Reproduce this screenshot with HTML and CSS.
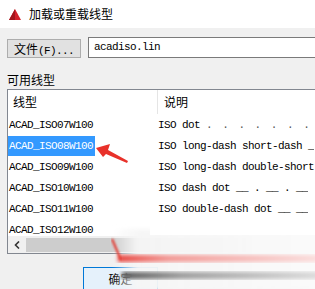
FILE: index.html
```html
<!DOCTYPE html>
<html lang="zh-CN">
<head>
    <meta charset="UTF-8">
    <title>加载或重载线型</title>
    <link rel="stylesheet" href="styles.css">
</head>
<body>
    <div class="titlebar">
        <svg class="logo" viewBox="0 0 12 11">
            <polygon points="6,0 12,11 0,11" fill="#d4202a"/>
            <polygon points="6,0 6,11 0,11" fill="#a3151c"/>
        </svg>
        <span class="title">加载或重载线型</span>
    </div>

    <div class="content">
        <div class="file-row">
            <button class="file-btn"><span class="cjk">文件</span>(F)...</button>
            <div class="file-input">acadiso.lin</div>
        </div>

        <div class="label">可用线型</div>

        <div class="list">
            <div class="list-head">
                <div class="h-name">线型</div>
                <div class="h-desc">说明</div>
            </div>
            <div class="rows">
                <div class="row">
                    <div class="c-name"><span>ACAD_ISO07W100</span></div>
                    <div class="c-desc">ISO dot <span class="dots">. . . . . . .</span></div>
                </div>
                <div class="row">
                    <div class="c-name"><span class="selected">ACAD_ISO08W100</span></div>
                    <div class="c-desc">ISO long-dash short-dash _</div>
                </div>
                <div class="row">
                    <div class="c-name"><span>ACAD_ISO09W100</span></div>
                    <div class="c-desc">ISO long-dash double-short</div>
                </div>
                <div class="row">
                    <div class="c-name"><span>ACAD_ISO10W100</span></div>
                    <div class="c-desc">ISO dash dot __ . __ . __</div>
                </div>
                <div class="row">
                    <div class="c-name"><span>ACAD_ISO11W100</span></div>
                    <div class="c-desc">ISO double-dash dot __ __</div>
                </div>
                <div class="row">
                    <div class="c-name"><span>ACAD_ISO12W100</span></div>
                    <div class="c-desc">ISO dash double-dot __ . .</div>
                </div>
            </div>
            <div class="hscroll">
                <div class="scroll-btn">
                    <svg viewBox="0 0 6 8" class="chev"><polyline points="5,0.5 1.5,4 5,7.5" fill="none" stroke="#333" stroke-width="1.6"/></svg>
                </div>
                <div class="thumb"></div>
            </div>
        </div>

        <div class="footer">
            <button class="ok">确定</button>
        </div>
    </div>

    <!-- annotation arrows and motion smear over the dialog -->
    <svg class="overlay" viewBox="0 0 315 289">
        <defs>
            <filter id="blur1"><feGaussianBlur stdDeviation="1.2"/></filter>
            <filter id="blur2"><feGaussianBlur stdDeviation="2.2"/></filter>
            <linearGradient id="haze" x1="0" x2="1" y1="0" y2="0">
                <stop offset="0" stop-color="#f4f4f4" stop-opacity="0"/>
                <stop offset="0.12" stop-color="#f6f6f6" stop-opacity="0.95"/>
                <stop offset="1" stop-color="#fafafa" stop-opacity="1"/>
            </linearGradient>
            <linearGradient id="pink" x1="0" x2="1" y1="0" y2="0">
                <stop offset="0" stop-color="#e8403a"/>
                <stop offset="0.25" stop-color="#f29490"/>
                <stop offset="1" stop-color="#fadcdb"/>
            </linearGradient>
            <linearGradient id="grey" x1="0" x2="1" y1="0" y2="0">
                <stop offset="0" stop-color="#555"/>
                <stop offset="0.3" stop-color="#9a9a9a"/>
                <stop offset="1" stop-color="#dcdcdc"/>
            </linearGradient>
        </defs>
        <polygon points="96,148 110,144 108,150 128,161 127,163 106,154 103,157" fill="#e8312a"/>

        <rect x="112" y="229" width="210" height="62" fill="url(#haze)" filter="url(#blur2)"/>
        <rect x="150" y="221" width="170" height="14" fill="#fff"/>
        <rect x="118" y="255" width="200" height="7" fill="url(#pink)" filter="url(#blur2)"/>
        <rect x="122" y="272" width="200" height="7" fill="url(#grey)" filter="url(#blur2)"/>
        <line x1="112" y1="239" x2="121" y2="260" stroke="#e23a33" stroke-width="2.2" filter="url(#blur1)"/>
    </svg>
</body>
</html>
```

FILE: styles.css
```css
* {
    margin: 0;
    padding: 0;
    box-sizing: border-box;
}

body {
    width: 315px;
    height: 289px;
    overflow: hidden;
    position: relative;
    background: #f0f0f0;
    font-family: "Noto Sans CJK SC", "Liberation Sans", sans-serif;
    font-size: 12px;
    color: #000;
}

.titlebar {
    height: 28px;
    background: #fff;
    display: flex;
    align-items: center;
    gap: 8px;
    padding-left: 9px;
}

.logo {
    width: 12px;
    height: 11px;
}

.title {
    line-height: 16px;
}

.content {
    padding: 9px 0 0 7px;
}

.file-row {
    display: flex;
    align-items: center;
    gap: 7px;
    height: 21px;
}

.file-btn {
    width: 74px;
    height: 19px;
    margin-top: 1px;
    background: #e1e1e1;
    border: 1px solid #adadad;
    text-align: left;
    padding-left: 6px;
    font-family: "Liberation Mono", "Noto Sans CJK SC", monospace;
    font-size: 11px;
    letter-spacing: -0.6px;
    line-height: 17px;
    color: #000;
}

.file-btn .cjk {
    font-family: "Noto Sans CJK SC", sans-serif;
    font-size: 12px;
    letter-spacing: 0;
}

.file-input {
    flex: 1;
    height: 21px;
    background: #fff;
    border: 1px solid #7a7a7a;
    border-right: none;
    padding-left: 5px;
    font-family: "Liberation Mono", monospace;
    font-size: 11px;
    letter-spacing: -0.6px;
    line-height: 19px;
}

.label {
    margin-top: 14px;
    height: 16px;
    line-height: 16px;
}

.list {
    margin-top: 1px;
    width: 310px;
    height: 165px;
    background: #fff;
    border: 1px solid #828790;
    display: flex;
    flex-direction: column;
}

.list-head {
    display: flex;
    height: 24px;
    line-height: 24px;
    flex-shrink: 0;
}

.h-name {
    width: 150px;
    flex-shrink: 0;
    padding-left: 5px;
    border-right: 1px solid #e5e5e5;
}

.h-desc {
    padding-left: 6px;
}

.rows {
    height: 122px;
    overflow: hidden;
    flex-shrink: 0;
}

.row {
    display: flex;
    height: 21px;
    padding-top: 1px;
    font-family: "Liberation Mono", monospace;
    font-size: 11px;
    letter-spacing: -0.6px;
    line-height: 20px;
    white-space: pre;
}

.c-name {
    width: 150px;
    flex-shrink: 0;
}

.c-name span {
    display: inline-block;
    padding: 0 2px 0 1px;
}

.c-name .selected {
    background: #3399ff;
    color: #fff;
}

.c-desc {
    min-width: 0;
    overflow: hidden;
}

.dots {
    letter-spacing: 1.5px;
    color: #555;
}

.hscroll {
    height: 17px;
    background: #f0f0f0;
    display: flex;
    align-items: center;
    flex-shrink: 0;
}

.scroll-btn {
    width: 17px;
    height: 17px;
    display: flex;
    align-items: center;
    justify-content: center;
}

.chev {
    width: 6px;
    height: 8px;
}

.thumb {
    margin-left: 1px;
    width: 220px;
    height: 14px;
    background: #cdcdcd;
}

.footer {
    padding-left: 76px;
    padding-top: 13px;
}

.ok {
    width: 75px;
    height: 23px;
    background: #e5f1fb;
    border: 1px solid #0078d7;
    font-family: "Noto Sans CJK SC", sans-serif;
    font-size: 12px;
    color: #000;
}

.overlay {
    position: absolute;
    left: 0;
    top: 0;
    width: 315px;
    height: 289px;
    pointer-events: none;
}
```
